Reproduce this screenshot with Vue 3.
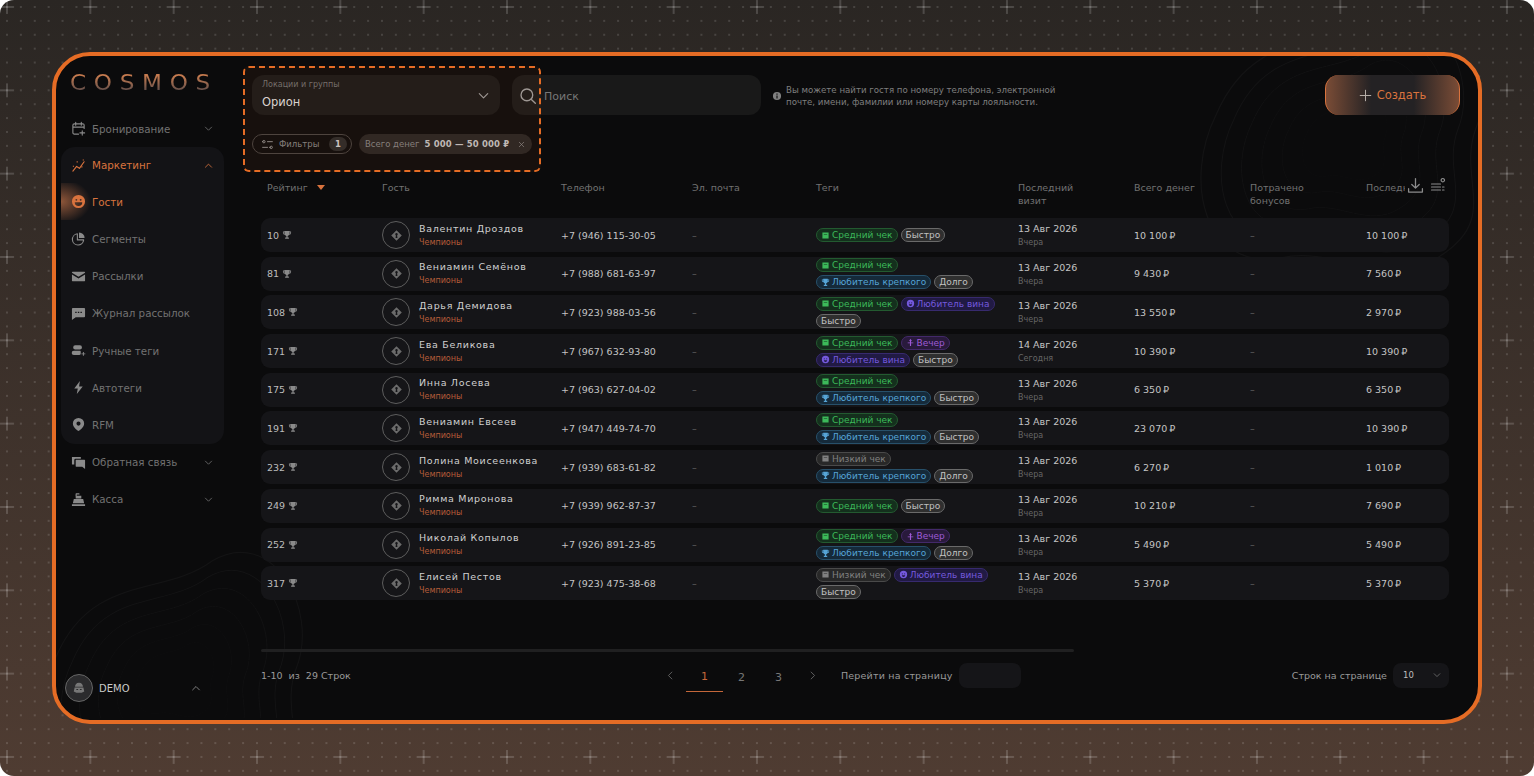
<script setup>
const icons = {
  calendar: { s: 'M8 14H3.500A1.500 1.500 0 0 1 2 12.500v-8A1.500 1.500 0 0 1 3.500 3h9A1.500 1.500 0 0 1 14 4.500V8M5 1.500v3M11 1.500v3M2 6.500h12M12 10.500v4.500M9.500 12.700h5' },
  chart: { s: 'M2 14l4-5 3 2 5-7', f: 'M2 8.200h1.200v1.200H2zM6 3.500h1.200v1.200H6zM12.500 1.500h1.200v1.200h-1.200zM11 8.800h1.200V10H11z' },
  smile: { f: 'M8 1a7 7 0 1 0 0 14A7 7 0 0 0 8 1zM5.700 5.200a1 1 0 1 1 0 2 1 1 0 0 1 0-2zm4.600 0a1 1 0 1 1 0 2 1 1 0 0 1 0-2zM4 8.800h8a4 4 0 0 1-8 0z' },
  pie: { s: 'M6.800 3A6 6 0 1 0 13.500 9.500H6.800z', f: 'M8.500 1.500a6 6 0 0 1 6 6h-6z' },
  mail: { f: 'M1.500 3h13a.5.500 0 0 1 .5.500v.6L8 8.300 1 4.100v-.6a.5.500 0 0 1 .5-.5zM1 5.800l7 4.200 7-4.200v6.700a.5.500 0 0 1-.5.500h-13a.5.500 0 0 1-.5-.5z' },
  chat: { f: 'M2 2h12a1 1 0 0 1 1 1v8a1 1 0 0 1-1 1H5l-4 3V3a1 1 0 0 1 1-1zm2.500 4v1.500H6V6zm2.800 0v1.500h1.500V6zm2.800 0v1.500h1.500V6z' },
  tags: { f: 'M4.500 2.500h5a2.200 2.200 0 0 1 0 4.400h-5a2.200 2.200 0 0 1 0-4.400zM3 8.300h7a2 2 0 0 1 .4 1.200v1.700A1.500 1.500 0 0 1 9 12.800H3a2.250 2.250 0 0 1 0-4.500zM12.700 9.500h1v1.600h1.600v1h-1.600v1.600h-1v-1.600h-1.600v-1h1.600z' },
  bolt: { f: 'M9.500 1L3.500 9h3.700L6.200 15 12.500 6.800H8.600z' },
  pin: { f: 'M8 1a6 6 0 0 0-6 6c0 3.600 3.600 6.700 6 8 2.400-1.300 6-4.400 6-8a6 6 0 0 0-6-6zm0 3.800a2.200 2.200 0 1 1 0 4.400 2.200 2.200 0 0 1 0-4.400z' },
  feedback: { f: 'M1 2h9.500v2H5a1.500 1.500 0 0 0-1.500 1.500V10H1zM5 5h9.500a.5.500 0 0 1 .5.500V15l-3-2.500H5.500A.5.500 0 0 1 5 12z' },
  cash: { f: 'M1 13h14v2H1zM3 7.500h10l1 4.500H2zM5 4h6v3H5z', s: 'M5.500 4V2h3' },
  chevron: { s: 'M3.500 6l4.500 4.500L12.500 6' },
  chevronUp: { s: 'M3.500 10.500L8 6l4.500 4.500' },
  left: { s: 'M10 3L5 8l5 5' },
  right: { s: 'M6 3l5 5-5 5' },
  plus: { s: 'M8 1.500v13M1.500 8h13' },
  search: { s: 'M7 1.800a5.200 5.200 0 1 0 0 10.400A5.200 5.200 0 0 0 7 1.800zM10.800 10.800l3.700 3.700' },
  info: { f: 'M8 1.500a6.500 6.500 0 1 0 0 13 6.500 6.500 0 0 0 0-13zM7.100 4h1.800v1.800H7.100zm0 3h1.800v5H7.100z' },
  filter: { s: 'M2 4.500a1.500 1.500 0 1 0 3 0 1.500 1.500 0 1 0-3 0zM8 4.500h6M11 11.500a1.500 1.500 0 1 0 3 0 1.500 1.500 0 1 0-3 0zM2 11.500h6' },
  close: { s: 'M4 4l8 8M12 4l-8 8' },
  download: { s: 'M8 1.500v8.500M4.500 7L8 10.500 11.500 7M1.500 11v3.200h13V11' },
  columns: { s: 'M1.500 7h9M1.500 10h9M1.500 13h9M12.500 10h1.500M12.500 13h1.500M12.800 1.500a1.700 1.700 0 1 0 .01 0z' },
  trophy: { f: 'M4 1.500h8v1h2.500v2a3 3 0 0 1-3 3h-.2A3.500 3.500 0 0 1 9 9.600V12h2v2H5v-2h2V9.600A3.500 3.500 0 0 1 4.700 7.500h-.2a3 3 0 0 1-3-3v-2H4zm-1.200 2.200v.800c0 .8.500 1.400 1.200 1.700V3.700zm10.400 0H12v2.500c.7-.3 1.200-.9 1.200-1.700z' },
  guest: { f: 'M8 1.500L14.500 8 8 14.500 1.500 8zM8 5a1.600 1.600 0 0 0-.7 3L6.800 11h2.400l-.5-3A1.600 1.600 0 0 0 8 5z' },
  trooper: { f: 'M8 2c-3 0-4.500 2-4.500 4.500h9C12.500 4 11 2 8 2zM3 7.500h10L14 12l-3 1.500H5L2 12zm2 1.500v1.200h2V9zm4 0v1.200h2V9z' },
  square: { f: 'M2.500 2.500h11v11h-11zM5 6v1.200h6V6z' },
  moon: { f: 'M8 1.500a6.500 6.500 0 1 0 0 13 6.500 6.500 0 0 0 0-13zM5 6h2v1.500H5zm4 0h2v1.500H9zM5 9.500h6a3 3 0 0 1-6 0z' },
  evening: { f: 'M8 1.500l2.500 4H9V8h4v1.500H9V14H7V9.500H3V8h4V5.500H5.500z' },
}

const menuTop = [{ label: 'Бронирование', icon: 'calendar', chevron: true }]
const menuGroup = [
  { label: 'Гости', icon: 'smile', active: true },
  { label: 'Сегменты', icon: 'pie' },
  { label: 'Рассылки', icon: 'mail' },
  { label: 'Журнал рассылок', icon: 'chat' },
  { label: 'Ручные теги', icon: 'tags' },
  { label: 'Автотеги', icon: 'bolt' },
  { label: 'RFM', icon: 'pin' },
]
const menuBottom = [
  { label: 'Обратная связь', icon: 'feedback', chevron: true },
  { label: 'Касса', icon: 'cash', chevron: true },
]

const tagTypes = {
  mid: { label: 'Средний чек', cls: 'green', icon: 'square' },
  low: { label: 'Низкий чек', cls: 'grey', icon: 'square' },
  fast: { label: 'Быстро', cls: 'plain' },
  long: { label: 'Долго', cls: 'plain' },
  strong: { label: 'Любитель крепкого', cls: 'blue', icon: 'trophy' },
  wine: { label: 'Любитель вина', cls: 'indigo', icon: 'moon' },
  evening: { label: 'Вечер', cls: 'violet', icon: 'evening' },
}

const columns = [
  { label: 'Рейтинг', sort: true },
  { label: 'Гость' },
  { label: 'Телефон' },
  { label: 'Эл. почта' },
  { label: 'Теги' },
  { label: 'Последний визит' },
  { label: 'Всего денег' },
  { label: 'Потрачено бонусов' },
]

const guests = [
  { rating: 10, name: 'Валентин Дроздов', phone: '+7 (946) 115-30-05', tags: ['mid', 'fast'], money: '10 100', last: '10 100' },
  { rating: 81, name: 'Вениамин Семёнов', phone: '+7 (988) 681-63-97', tags: ['mid', 'strong', 'long'], money: '9 430', last: '7 560' },
  { rating: 108, name: 'Дарья Демидова', phone: '+7 (923) 988-03-56', tags: ['mid', 'wine', 'fast'], money: '13 550', last: '2 970' },
  { rating: 171, name: 'Ева Беликова', phone: '+7 (967) 632-93-80', tags: ['mid', 'evening', 'wine', 'fast'], money: '10 390', last: '10 390', date: '14 Авг 2026', ago: 'Сегодня' },
  { rating: 175, name: 'Инна Лосева', phone: '+7 (963) 627-04-02', tags: ['mid', 'strong', 'fast'], money: '6 350', last: '6 350' },
  { rating: 191, name: 'Вениамин Евсеев', phone: '+7 (947) 449-74-70', tags: ['mid', 'strong', 'fast'], money: '23 070', last: '10 390' },
  { rating: 232, name: 'Полина Моисеенкова', phone: '+7 (939) 683-61-82', tags: ['low', 'strong', 'long'], money: '6 270', last: '1 010' },
  { rating: 249, name: 'Римма Миронова', phone: '+7 (939) 962-87-37', tags: ['mid', 'fast'], money: '10 210', last: '7 690' },
  { rating: 252, name: 'Николай Копылов', phone: '+7 (926) 891-23-85', tags: ['mid', 'evening', 'strong', 'long'], money: '5 490', last: '5 490' },
  { rating: 317, name: 'Елисей Пестов', phone: '+7 (923) 475-38-68', tags: ['low', 'wine', 'fast'], money: '5 370', last: '5 370' },
]

// decorative contour lines, same blob scaled a few times
const contourScales = [1, 0.86, 0.72, 0.58, 0.44, 0.3, 0.16]
const contour = 'M-100 -20C-70 -90 -10 -70 30 -100C80 -130 120 -60 100 -10C85 30 120 60 70 90C30 115 -10 80 -50 90C-110 100 -125 30 -100 -20Z'
const dots = [-3, -2, -1, 0, 1, 2, 3]
</script>

<template>
  <div class="page">
    <svg class="backdrop" width="1534" height="776">
      <defs>
        <pattern id="grid" x="-34.67" y="-34.67" width="83.33" height="83.33" patternUnits="userSpaceOnUse">
          <template v-for="a in dots" :key="a">
            <circle v-for="b in dots" :key="b" :cx="41.67 + a * 13.89" :cy="41.67 + b * 13.89" r="0.8" fill="#fff" fill-opacity="0.3" />
          </template>
          <path d="M34.67 41.67h14M41.67 34.67v14" stroke="#fff" stroke-opacity="0.32" fill="none" />
        </pattern>
      </defs>
      <rect width="1534" height="776" fill="url(#grid)" />
    </svg>

    <div class="frame">
      <svg class="contours" width="1422" height="662">
        <g fill="none" stroke="#fff" stroke-opacity="0.035">
          <path v-for="s in contourScales" :key="s" :d="contour" :transform="`translate(1290 85) scale(${s * 1.3})`" />
          <path v-for="s in contourScales" :key="'b' + s" :d="contour" :transform="`translate(120 625) scale(${s * 1.2})`" />
        </g>
      </svg>

      <aside class="sidebar">
        <div class="logo">COSMOS</div>

        <nav class="menu">
          <div v-for="item in menuTop" :key="item.label" class="menu-item">
            <svg class="menu-icon" viewBox="0 0 16 16"><path v-if="icons[item.icon].f" :d="icons[item.icon].f" class="fill" /><path v-if="icons[item.icon].s" :d="icons[item.icon].s" class="line" /></svg>
            <span>{{ item.label }}</span>
            <svg class="menu-chevron" viewBox="0 0 16 16"><path :d="icons.chevron.s" class="line" /></svg>
          </div>

          <div class="menu-group">
            <div class="menu-item accent">
              <svg class="menu-icon" viewBox="0 0 16 16"><path :d="icons.chart.f" class="fill" /><path :d="icons.chart.s" class="line" /></svg>
              <span>Маркетинг</span>
              <svg class="menu-chevron" viewBox="0 0 16 16"><path :d="icons.chevronUp.s" class="line" /></svg>
            </div>
            <div v-for="item in menuGroup" :key="item.label" class="menu-item" :class="{ accent: item.active, current: item.active }">
              <svg class="menu-icon" viewBox="0 0 16 16"><path v-if="icons[item.icon].f" :d="icons[item.icon].f" class="fill" fill-rule="evenodd" /><path v-if="icons[item.icon].s" :d="icons[item.icon].s" class="line" /></svg>
              <span>{{ item.label }}</span>
            </div>
          </div>

          <div v-for="item in menuBottom" :key="item.label" class="menu-item">
            <svg class="menu-icon" viewBox="0 0 16 16"><path v-if="icons[item.icon].f" :d="icons[item.icon].f" class="fill" /><path v-if="icons[item.icon].s" :d="icons[item.icon].s" class="line" /></svg>
            <span>{{ item.label }}</span>
            <svg class="menu-chevron" viewBox="0 0 16 16"><path :d="icons.chevron.s" class="line" /></svg>
          </div>
        </nav>

        <div class="user">
          <div class="user-avatar">
            <svg viewBox="0 0 16 16"><path :d="icons.trooper.f" class="fill" fill-rule="evenodd" /></svg>
          </div>
          <span class="user-name">DEMO</span>
          <svg class="user-chevron" viewBox="0 0 16 16"><path :d="icons.chevronUp.s" class="line" /></svg>
        </div>
      </aside>

      <main class="main">
        <div class="highlight"></div>

        <div class="toolbar">
          <div class="select-field">
            <div class="select-text">
              <span class="select-label">Локации и группы</span>
              <span class="select-value">Орион</span>
            </div>
            <svg viewBox="0 0 16 16"><path :d="icons.chevron.s" class="line" /></svg>
          </div>
          <div class="search-field">
            <svg viewBox="0 0 16 16"><path :d="icons.search.s" class="line" /></svg>
            <span>Поиск</span>
          </div>
          <div class="hint">
            <svg viewBox="0 0 16 16"><path :d="icons.info.f" class="fill" fill-rule="evenodd" /></svg>
            <p>Вы можете найти гостя по номеру телефона, электронной<br />почте, имени, фамилии или номеру карты лояльности.</p>
          </div>
          <button class="create">
            <svg viewBox="0 0 16 16"><path :d="icons.plus.s" class="line" /></svg>
            <span>Создать</span>
          </button>
        </div>

        <div class="filters">
          <div class="chip-filter">
            <svg viewBox="0 0 16 16"><path :d="icons.filter.s" class="line" /></svg>
            <span>Фильтры</span>
            <b>1</b>
          </div>
          <div class="chip-range">
            <span>Всего денег</span>
            <b>5 000 — 50 000 ₽</b>
            <svg viewBox="0 0 16 16"><path :d="icons.close.s" class="line" /></svg>
          </div>
        </div>

        <section class="table">
          <div class="grid head">
            <div v-for="col in columns" :key="col.label" class="head-cell">
              {{ col.label }}<i v-if="col.sort" class="sort"></i>
            </div>
            <div class="head-last">
              <span class="head-clip">Последний</span>
              <svg class="head-download" viewBox="0 0 16 16"><path :d="icons.download.s" class="line" /></svg>
              <svg class="head-columns" viewBox="0 0 16 16"><path :d="icons.columns.s" class="line" /></svg>
            </div>
          </div>

          <div v-for="g in guests" :key="g.rating" class="grid row">
            <div class="rating">
              {{ g.rating }}
              <svg viewBox="0 0 16 16"><path :d="icons.trophy.f" class="fill" fill-rule="evenodd" /></svg>
            </div>
            <div class="guest">
              <div class="avatar"><svg viewBox="0 0 16 16"><path :d="icons.guest.f" class="fill" fill-rule="evenodd" /></svg></div>
              <div class="guest-text">
                <span class="guest-name">{{ g.name }}</span>
                <span class="guest-seg">Чемпионы</span>
              </div>
            </div>
            <div class="cell">{{ g.phone }}</div>
            <div class="cell muted">–</div>
            <div class="tags">
              <span v-for="t in g.tags" :key="t" class="tag" :class="tagTypes[t].cls">
                <svg v-if="tagTypes[t].icon" viewBox="0 0 16 16"><path :d="icons[tagTypes[t].icon].f" fill-rule="evenodd" /></svg>
                {{ tagTypes[t].label }}
              </span>
            </div>
            <div class="visit">
              <span>{{ g.date || '13 Авг 2026' }}</span>
              <small>{{ g.ago || 'Вчера' }}</small>
            </div>
            <div class="cell">{{ g.money }}&#8201;₽</div>
            <div class="cell muted">–</div>
            <div class="cell">{{ g.last }}&#8201;₽</div>
          </div>
        </section>

        <div class="scrollbar"></div>

        <footer class="footer">
          <span class="count">1-10 &nbsp;из &nbsp;29 Строк</span>
          <div class="pager">
            <svg class="pager-arrow" viewBox="0 0 16 16"><path :d="icons.left.s" class="line" /></svg>
            <span class="page-num on">1</span>
            <span class="page-num">2</span>
            <span class="page-num">3</span>
            <svg class="pager-arrow" viewBox="0 0 16 16"><path :d="icons.right.s" class="line" /></svg>
            <span class="goto">Перейти на страницу</span>
            <div class="goto-input"></div>
          </div>
          <div class="per-page">
            <span>Строк на странице</span>
            <div class="per-select">
              <span>10</span>
              <svg viewBox="0 0 16 16"><path :d="icons.chevron.s" class="line" /></svg>
            </div>
          </div>
        </footer>
      </main>
    </div>
  </div>
</template>

<style>
html, body { background: #fff; overflow: hidden; }
</style>

<style scoped>
.page {
  position: relative;
  width: 1534px;
  height: 776px;
  box-sizing: border-box;
  padding: 52px;
  border-radius: 14px;
  overflow: hidden;
  background: linear-gradient(180deg, #2a2623 0%, #4f3c32 100%);
  font-family: "DejaVu Sans", sans-serif;
  color: #c9c9c9;
}
.backdrop { position: absolute; left: 0; top: 0; }
.fill { fill: currentColor; }
.line { fill: none; stroke: currentColor; stroke-width: 1.2; stroke-linecap: round; stroke-linejoin: round; }

.frame {
  position: relative;
  display: flex;
  height: 100%;
  box-sizing: border-box;
  border: 4px solid #e56c25;
  border-radius: 38px;
  background: #0b0b0c;
  overflow: hidden;
}
.contours { position: absolute; left: 0; top: 0; pointer-events: none; }

.sidebar {
  position: relative;
  width: 187px;
  flex: none;
  display: flex;
  flex-direction: column;
  padding: 15px 19px 18px 5px;
  box-sizing: border-box;
}
.logo {
  width: max-content;
  margin-left: 9px;
  font-size: 21px;
  line-height: 24px;
  letter-spacing: 7px;
  white-space: nowrap;
  transform: scaleX(1.1);
  transform-origin: left center;
  background: linear-gradient(180deg, #c67b4f 20%, #66504a 80%);
  -webkit-background-clip: text;
  background-clip: text;
  color: transparent;
}
.menu { margin-top: 15px; display: flex; flex-direction: column; }
.menu-item {
  position: relative;
  display: flex;
  align-items: center;
  height: 37.200px;
  padding-left: 10px;
  font-size: 10.300px;
  color: #727272;
}
.menu-item span { margin-left: 6px; }
.menu-icon { width: 15px; height: 15px; color: #8a8a8a; flex: none; }
.menu-chevron { width: 11px; height: 11px; margin-left: auto; margin-right: 10px; color: #707070; }
.menu-group {
  background: #131316;
  border-radius: 14px;
  overflow: hidden;
}
.menu-item.accent, .menu-item.accent .menu-icon, .menu-item.accent .menu-chevron { color: #d9733e; }
.menu-group > .menu-item:first-child { height: 36px; }
.current .menu-icon { color: #e8905f; }
.current::before {
  content: "";
  position: absolute;
  left: 0;
  top: 0;
  width: 30px;
  height: 37px;
  background: radial-gradient(ellipse 100% 60% at 0 50%, rgba(224, 130, 80, 0.6), rgba(224, 130, 80, 0));
}
.current .menu-icon, .current span { position: relative; }

.user {
  margin-top: auto;
  display: flex;
  align-items: center;
  padding-left: 4px;
}
.user-avatar {
  width: 28px;
  height: 28px;
  border-radius: 50%;
  border: 1px solid #666;
  background: #2b2b2d;
  box-sizing: border-box;
  display: flex;
  align-items: center;
  justify-content: center;
  color: #777;
}
.user-avatar svg { width: 14px; height: 14px; }
.user-name { margin-left: 6px; font-size: 10px; color: #c9c9c9; }
.user-chevron { width: 12px; height: 12px; margin-left: auto; margin-right: 22px; color: #8a8a8a; }

.main {
  position: relative;
  flex: 1;
  min-width: 0;
  display: flex;
  flex-direction: column;
  padding: 19px 18px 0 9px;
  box-sizing: border-box;
}
.highlight {
  position: absolute;
  left: 0;
  top: 10px;
  width: 298px;
  height: 106px;
  box-sizing: border-box;
  border: 2px dashed #e56c25;
  border-radius: 6px;
  background: rgba(229, 108, 37, 0.055);
  z-index: 2;
  pointer-events: none;
}

.toolbar { display: flex; align-items: center; height: 40px; }
.select-field {
  width: 248px;
  height: 40px;
  flex: none;
  box-sizing: border-box;
  padding: 0 9px 0 10px;
  display: flex;
  align-items: center;
  justify-content: space-between;
  background: #191919;
  border-radius: 12px;
}
.select-field svg { width: 15px; height: 15px; color: #9a9a9a; }
.select-text { display: flex; flex-direction: column; }
.select-label { font-size: 8px; color: #6f6f6f; line-height: 12px; }
.select-value { font-size: 11.500px; color: #d8d8d8; line-height: 18px; margin-top: 2px; }
.search-field {
  width: 249px;
  height: 40px;
  flex: none;
  margin-left: 12px;
  box-sizing: border-box;
  padding: 2px 0 0 7px;
  display: flex;
  align-items: center;
  gap: 7px;
  background: #191919;
  border-radius: 12px;
  font-size: 11px;
  color: #777;
}
.search-field svg { width: 18px; height: 18px; color: #9a9a9a; }
.hint { display: flex; align-items: center; margin-left: 11px; padding-top: 2px; color: #7f7f7f; }
.hint svg { width: 10px; height: 10px; flex: none; color: #808080; }
.hint p { margin: 0 0 0 4px; font-size: 8.640px; line-height: 12px; white-space: nowrap; }
.create {
  margin-left: auto;
  width: 135px;
  height: 40px;
  flex: none;
  display: flex;
  align-items: center;
  justify-content: center;
  gap: 5px;
  border: 0;
  border-left: 1px solid #d9733e;
  border-right: 1px solid #d9733e;
  border-radius: 14px;
  background: linear-gradient(90deg, #7a4c36 0%, #242224 34%, #242224 66%, #7a4c36 100%);
  color: #d9733e;
  font-family: inherit;
  font-size: 11.500px;
}
.create svg { width: 13px; height: 13px; color: #b8b0aa; }

.filters { display: flex; gap: 7px; margin-top: 19px; height: 20px; }
.chip-filter, .chip-range {
  display: flex;
  align-items: center;
  height: 20px;
  box-sizing: border-box;
  border-radius: 10px;
  font-size: 8.500px;
  color: #808080;
}
.chip-filter { width: 100px; border: 1px solid #454240; padding: 0 4px 0 8px; }
.chip-filter svg { width: 13px; height: 13px; color: #8a8a8a; }
.chip-filter span { margin-left: 5px; }
.chip-filter b {
  margin-left: auto;
  width: 18px;
  height: 14px;
  border-radius: 7px;
  background: #2a2a2a;
  color: #c9c9c9;
  text-align: center;
  line-height: 14px;
}
.chip-range { width: 173px; background: #272423; padding: 0 6px; }
.chip-range b { margin-left: 5px; font-weight: 700; color: #bdbdbd; font-size: 8.500px; letter-spacing: 0.15px; white-space: nowrap; }
.chip-range svg { margin-left: auto; width: 9px; height: 9px; color: #8a8a8a; }

.table { margin: 0 11px 0 9px; }
.grid {
  display: grid;
  grid-template-columns: 115px 179px 131px 124px 202px 116px 116px 116px 83px;
  padding-left: 6px;
}
.head { margin-top: 27px; height: 37px; font-size: 9.500px; color: #727272; line-height: 13px; }
.head-cell { padding-right: 46px; }
.head-cell:nth-child(1), .head-cell:nth-child(2), .head-cell:nth-child(3), .head-cell:nth-child(4), .head-cell:nth-child(5) { padding-right: 0; }
.sort {
  display: inline-block;
  margin-left: 9px;
  width: 0;
  height: 0;
  border: 4px solid transparent;
  border-top: 5px solid #d9733e;
  border-bottom: 0;
  vertical-align: 1px;
}
.head-last { display: flex; align-items: flex-start; color: #727272; }
.head-clip { width: 39px; overflow: hidden; flex: none; }
.head-download { width: 17px; height: 17px; color: #8c8c8c; margin: -4px 0 0 2px; flex: none; }
.head-columns { width: 16px; height: 16px; color: #8c8c8c; margin: -4px 0 0 6px; flex: none; }

.row {
  height: 34px;
  align-items: center;
  margin-bottom: 4.700px;
  background: #151518;
  border-radius: 9px;
  font-size: 9.500px;
}
.rating { display: flex; align-items: center; gap: 3px; color: #bdbdbd; }
.rating svg { width: 10px; height: 10px; color: #8a8a8a; }
.cell { color: #c4c4c4; white-space: nowrap; }
.muted { color: #666; }
.guest { display: flex; align-items: center; }
.avatar {
  width: 28px;
  height: 28px;
  border-radius: 50%;
  border: 1px solid #5d5d5d;
  box-sizing: border-box;
  display: flex;
  align-items: center;
  justify-content: center;
  color: #6b6b6b;
}
.avatar svg { width: 13px; height: 13px; }
.guest-text { display: flex; flex-direction: column; margin-left: 9px; }
.guest-name { font-size: 9.500px; letter-spacing: 0.7px; line-height: 14px; color: #d0d0d0; white-space: nowrap; }
.guest-seg { font-size: 8px; line-height: 12px; margin-top: 1px; color: #b65c38; }

.tags { display: flex; flex-wrap: wrap; gap: 3px; align-items: center; padding-right: 12px; }
.tag {
  display: inline-flex;
  align-items: center;
  gap: 2px;
  height: 14px;
  box-sizing: border-box;
  padding: 0 4px;
  border: 1px solid;
  border-radius: 7px;
  font-size: 9px;
  white-space: nowrap;
}
.tag svg { width: 9px; height: 9px; fill: currentColor; }
.green { color: #3cb95a; background: #14301d; border-color: #235a30; }
.grey { color: #808080; background: #282828; border-color: #4a4a4a; }
.plain { color: #c2c2c2; background: #2f2f2f; border-color: #6a6a6a; }
.blue { color: #56a4d6; background: #152a3a; border-color: #27506a; }
.indigo { color: #7459dd; background: #211a44; border-color: #372a6e; }
.violet { color: #9e5ad6; background: #291a3c; border-color: #43296a; }

.visit { display: flex; flex-direction: column; color: #c4c4c4; }
.visit span { line-height: 14px; }
.visit small { font-size: 8px; line-height: 11px; margin-top: 1px; color: #666; }

.scrollbar {
  width: 813px;
  height: 3px;
  margin: 44px 0 0 9px;
  background: #202021;
  border-radius: 2px;
}
.footer {
  position: relative;
  display: flex;
  align-items: center;
  justify-content: space-between;
  height: 25px;
  margin: 11px 11px 0 9px;
  font-size: 9.500px;
  color: #9a9a9a;
}
.pager { display: flex; align-items: center; margin-left: 43px; }
.pager-arrow { width: 11px; height: 11px; color: #6f6f6f; }
.page-num {
  width: 37px;
  height: 30px;
  margin-top: 4px;
  box-sizing: border-box;
  display: flex;
  align-items: center;
  justify-content: center;
  font-size: 11px;
  color: #777;
}
.page-num.on { color: #c4673a; border-bottom: 1px solid #c4673a; }
.pager .pager-arrow:first-child { margin-right: 10px; }
.page-num + .pager-arrow { margin-left: 10px; }
.goto { margin-left: 23px; letter-spacing: 0.2px; }
.goto-input { width: 62px; height: 25px; margin-left: 6px; background: #151518; border-radius: 8px; }
.per-page { display: flex; align-items: center; gap: 6px; }
.per-select {
  width: 56px;
  height: 25px;
  box-sizing: border-box;
  padding: 0 7px 0 10px;
  display: flex;
  align-items: center;
  justify-content: space-between;
  background: #151518;
  border-radius: 8px;
  font-size: 8.500px;
  color: #bdbdbd;
}
.per-select svg { width: 10px; height: 10px; color: #7a7a7a; }
</style>
